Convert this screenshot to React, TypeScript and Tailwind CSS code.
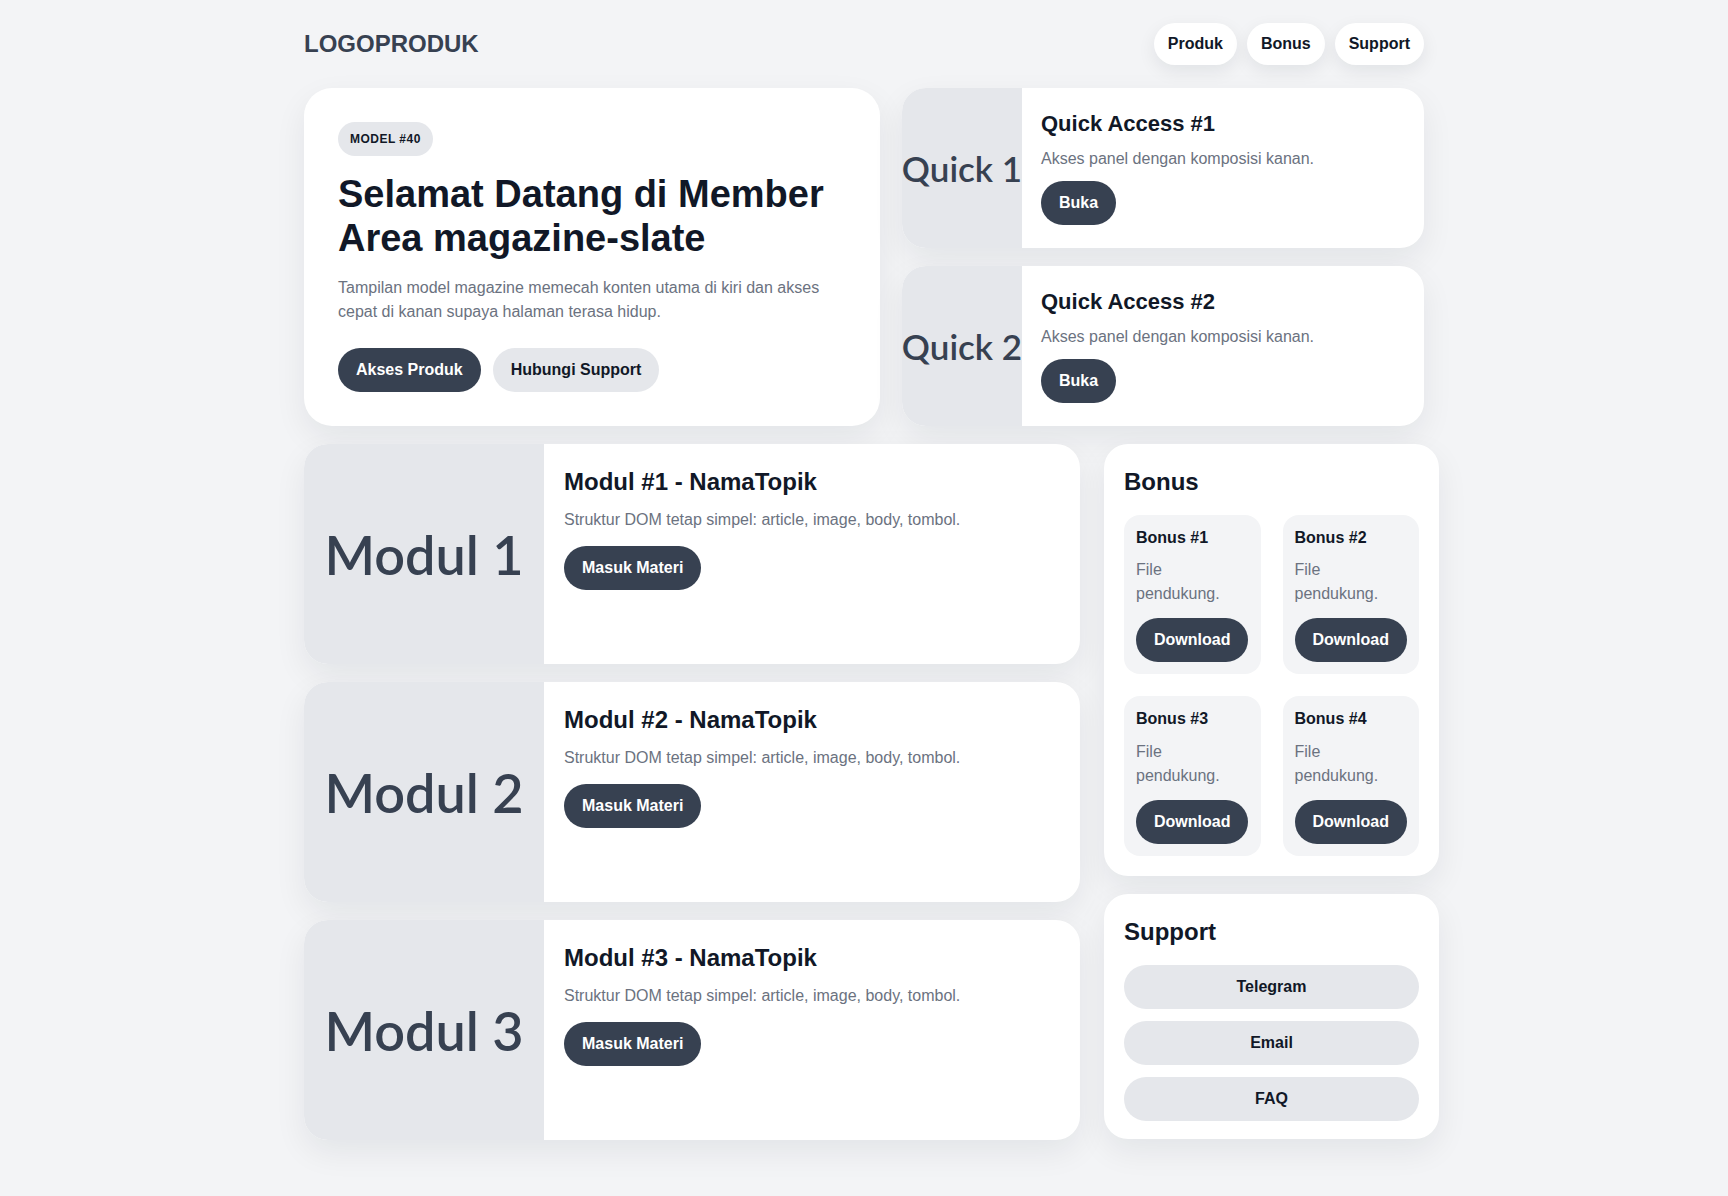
import React from 'react';

const quickItems = [1, 2];
const modules = [1, 2, 3];
const bonuses = [1, 2, 3, 4];
const supportLinks = ['Telegram', 'Email', 'FAQ'];

const cardShadow = 'shadow-[0_12px_32px_rgba(15,23,42,0.07)]';
const darkBtn = 'rounded-full bg-[#374151] px-[18px] py-3 text-[16px] font-bold leading-[20px] text-white';

export default function App() {
  return (
    <div className="min-h-screen bg-[#f3f4f6] font-['Liberation_Sans',Arial,sans-serif] text-[#111827]">
      <div className="mx-auto w-[1120px] pt-[23px] pb-14">
        {/* Header */}
        <header className="flex h-[42px] items-center justify-between">
          <div className="text-[24px] font-bold leading-none text-[#374151]">LOGOPRODUK</div>
          <nav className="flex gap-[10px]">
            {['Produk', 'Bonus', 'Support'].map((item) => (
              <a
                key={item}
                href="#"
                className="flex h-[42px] items-center rounded-full bg-white px-[14px] text-[16px] font-bold text-[#111827] shadow-[0_6px_18px_rgba(15,23,42,0.08)]"
              >
                {item}
              </a>
            ))}
          </nav>
        </header>

        {/* Hero + quick access */}
        <section className="mt-[23px] grid grid-cols-[576px_522px] gap-x-[22px]">
          <div className={`rounded-[28px] bg-white p-[34px] ${cardShadow}`}>
            <span className="inline-flex h-[34px] items-center rounded-full bg-[#e5e7eb] px-3 text-[12px] font-bold tracking-[0.04em] text-[#111827]">
              MODEL #40
            </span>
            <h1 className="mt-4 text-[38px] font-bold leading-[44px] text-[#111827]">
              Selamat Datang di Member Area magazine-slate
            </h1>
            <p className="mt-4 text-[16px] leading-[1.5] text-[#6b7280]">
              Tampilan model magazine memecah konten utama di kiri dan akses cepat di kanan supaya halaman terasa hidup.
            </p>
            <div className="mt-6 flex gap-3">
              <button className={darkBtn}>Akses Produk</button>
              <button className="rounded-full bg-[#e5e7eb] px-[18px] py-3 text-[16px] font-bold leading-[20px] text-[#111827]">
                Hubungi Support
              </button>
            </div>
          </div>

          <div className="flex flex-col gap-[18px]">
            {quickItems.map((n) => (
              <article key={n} className={`flex flex-1 overflow-hidden rounded-3xl bg-white ${cardShadow}`}>
                <div className="flex w-[120px] shrink-0 items-center justify-center whitespace-nowrap bg-[#e5e7eb] font-['Lato',sans-serif] text-[35px] font-semibold text-[#374151]">
                  Quick {n}
                </div>
                <div className="flex flex-col justify-center gap-[10px] px-[19px]">
                  <h3 className="text-[22px] font-bold leading-[1.2] text-[#111827]">Quick Access #{n}</h3>
                  <p className="text-[16px] leading-[1.5] text-[#6b7280]">Akses panel dengan komposisi kanan.</p>
                  <div>
                    <button className={darkBtn}>Buka</button>
                  </div>
                </div>
              </article>
            ))}
          </div>
        </section>

        {/* Modules + sidebar */}
        <section className="mt-[18px] flex items-start gap-6">
          <div className="flex w-[776px] shrink-0 flex-col gap-[18px]">
            {modules.map((n) => (
              <article key={n} className={`flex h-[220px] overflow-hidden rounded-3xl bg-white ${cardShadow}`}>
                <div className="flex w-[240px] shrink-0 items-center justify-center whitespace-nowrap bg-[#e5e7eb] font-['Lato',sans-serif] text-[54px] font-semibold text-[#374151]">
                  Modul {n}
                </div>
                <div className="px-5 pt-6">
                  <h3 className="text-[24px] font-bold leading-[1.2] text-[#111827]">Modul #{n} - NamaTopik</h3>
                  <p className="mt-[11px] text-[16px] leading-[1.5] text-[#6b7280]">
                    Struktur DOM tetap simpel: article, image, body, tombol.
                  </p>
                  <button className={`mt-[14px] ${darkBtn}`}>Masuk Materi</button>
                </div>
              </article>
            ))}
          </div>

          <aside className="flex w-[335px] shrink-0 flex-col gap-[18px]">
            <div className={`rounded-3xl bg-white px-5 pt-6 pb-5 ${cardShadow}`}>
              <h2 className="mb-[18px] text-[24px] font-bold leading-[1.2] text-[#111827]">Bonus</h2>
              <div className="grid grid-cols-2 gap-[22px]">
                {bonuses.map((n) => (
                  <div key={n} className="rounded-2xl bg-[#f3f4f6] p-3">
                    <h4 className="text-[16px] font-bold leading-[21.5px] text-[#111827]">Bonus #{n}</h4>
                    <p className="mt-[10px] text-[16px] leading-[24px] text-[#6b7280]">File pendukung.</p>
                    <button className={`mt-3 ${darkBtn}`}>Download</button>
                  </div>
                ))}
              </div>
            </div>

            <div className={`rounded-3xl bg-white px-5 pt-6 pb-[18px] ${cardShadow}`}>
              <h2 className="mb-[18px] text-[24px] font-bold leading-[1.2] text-[#111827]">Support</h2>
              <div className="flex flex-col gap-3">
                {supportLinks.map((label) => (
                  <a
                    key={label}
                    href="#"
                    className="block rounded-full bg-[#e5e7eb] py-3 text-center text-[16px] font-bold leading-[20px] text-[#111827]"
                  >
                    {label}
                  </a>
                ))}
              </div>
            </div>
          </aside>
        </section>
      </div>
    </div>
  );
}
